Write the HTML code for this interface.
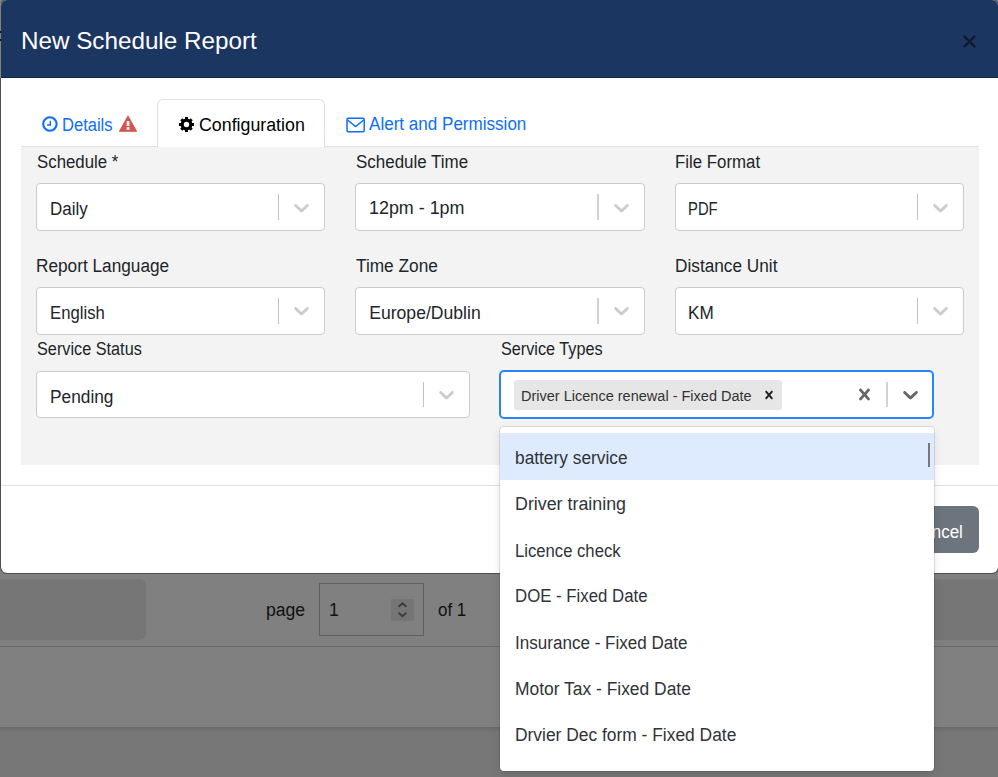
<!DOCTYPE html>
<html><head><meta charset="utf-8">
<style>
*{box-sizing:border-box;margin:0;padding:0}
html,body{width:998px;height:777px;overflow:hidden}
body{position:relative;background:#808080;font-family:"Liberation Sans",sans-serif;color:#212529}
.a{position:absolute;white-space:pre}
#modal{position:absolute;left:0;top:-1px;width:999px;height:575px;background:#fff;background-clip:padding-box;border-radius:7px;border:1px solid rgba(0,0,0,.38)}
</style></head><body>
<div class="a" style="left:-20px;top:579px;width:166px;height:61px;background:#767676;border-radius:6px"></div>
<div class="a" style="left:934px;top:579px;width:100px;height:61px;background:#767676"></div>
<div class="a" style="left:0px;top:646px;width:998px;height:1px;background:#6a6a6a"></div>
<div class="a" style="left:0px;top:727px;width:998px;height:50px;background:linear-gradient(#696969,#777 5px)"></div>
<div class="a" style="left:266.00px;top:599.50px;font-size:17.6px;line-height:21px;color:#111;">page</div>
<div class="a" style="left:319px;top:583px;width:105px;height:53px;border:1px solid #5f5f5f"></div>
<div class="a" style="left:329.00px;top:599.70px;font-size:17.6px;line-height:21px;color:#111;">1</div>
<div class="a" style="left:391px;top:599px;width:23px;height:22px;background:#757575"></div>
<svg class="a" style="left:391px;top:599px" width="23" height="22" viewBox="0 0 23 22"><path d="M8.2 7.3L11.5 4.3L14.8 7.3M8.2 14.2L11.5 17.2L14.8 14.2" fill="none" stroke="#3c3c3c" stroke-width="1.9" stroke-linecap="round" stroke-linejoin="round"/></svg>
<div class="a" style="left:437.90px;top:599.50px;font-size:17.6px;line-height:21px;color:#111;transform:scaleX(0.9629);transform-origin:0 0;">of 1</div>
<div id="modal"></div>
<div class="a" style="left:0px;top:0px;width:1px;height:78px;background:#858278"></div>
<div class="a" style="left:0px;top:31px;width:1px;height:2px;background:#111"></div>
<div class="a" style="left:0px;top:39px;width:1px;height:2px;background:#111"></div>
<div class="a" style="left:1px;top:0px;width:997px;height:78px;background:#1c3662;border-bottom:1px solid #0e2553;border-radius:6px 6px 0 0"></div>
<div class="a" style="left:21.49px;top:25.68px;font-size:24px;line-height:29px;color:#fff;transform:scaleX(1.0095);transform-origin:0 0;">New Schedule Report</div>
<svg class="a" style="left:962px;top:34px" width="15" height="15" viewBox="0 0 16 16"><path d="M2 2L14 14M14 2L2 14" stroke="#111a2c" stroke-width="2.4"/></svg>
<div class="a" style="left:21px;top:146px;width:958px;height:1px;background:#dee2e6"></div>
<div class="a" style="left:157px;top:99px;width:168px;height:49px;background:#fff;border:1px solid #dee2e6;border-bottom:none;border-radius:6px 6px 0 0"></div>
<svg class="a" style="left:42px;top:116.3px" width="16" height="16" viewBox="0 0 16 16"><circle cx="7.9" cy="8" r="6.7" fill="none" stroke="#0d6efd" stroke-width="2.1"/><path d="M8.3 4.8V9H5.1" fill="none" stroke="#0d6efd" stroke-width="1.4"/></svg>
<div class="a" style="left:62.46px;top:114.75px;font-size:17.6px;line-height:21px;color:#0d6efd;transform:scaleX(0.9400);transform-origin:0 0;">Details</div>
<svg class="a" style="left:119px;top:115px" width="18" height="17" viewBox="0 0 18 17"><path d="M9 1.2L17.4 16.2H0.6Z" fill="#d25650" stroke="#d25650" stroke-width="1.2" stroke-linejoin="round"/><rect x="7.7" y="6" width="2.7" height="4.9" fill="#fff"/><rect x="7.7" y="12.1" width="2.7" height="2.7" fill="#fff"/></svg>
<svg class="a" style="left:177.5px;top:116px" width="17" height="17" viewBox="0 0 17 17"><circle cx="8.5" cy="8.5" r="5.9" fill="#000"/><path d="M8.5 1V16M1 8.5H16M3.3 3.3L13.7 13.7M13.7 3.3L3.3 13.7" stroke="#000" stroke-width="3"/><circle cx="8.5" cy="8.5" r="2.7" fill="#fff"/></svg>
<div class="a" style="left:198.90px;top:114.90px;font-size:17.6px;line-height:21px;color:#000;transform:scaleX(1.0109);transform-origin:0 0;">Configuration</div>
<svg class="a" style="left:346px;top:117px" width="19" height="16" viewBox="0 0 19 16"><rect x="1" y="1.3" width="17.2" height="13.4" rx="1.2" fill="none" stroke="#0d6efd" stroke-width="1.5"/><path d="M1.5 3L9.6 9.5L17.7 3" fill="none" stroke="#0d6efd" stroke-width="1.5"/></svg>
<div class="a" style="left:369.40px;top:114.40px;font-size:17.6px;line-height:21px;color:#0d6efd;transform:scaleX(0.9694);transform-origin:0 0;">Alert and Permission</div>
<div class="a" style="left:21px;top:147px;width:958px;height:318px;background:#f3f3f3"></div>
<div class="a" style="left:36.50px;top:151.90px;font-size:17.6px;line-height:21px;color:#212529;transform:scaleX(0.9560);transform-origin:0 0;">Schedule *</div>
<div class="a" style="left:355.50px;top:151.90px;font-size:17.6px;line-height:21px;color:#212529;transform:scaleX(0.9637);transform-origin:0 0;">Schedule Time</div>
<div class="a" style="left:674.94px;top:151.90px;font-size:17.6px;line-height:21px;color:#212529;transform:scaleX(0.9561);transform-origin:0 0;">File Format</div>
<div class="a" style="left:36px;top:183px;width:289px;height:48px;background:#fff;border:1px solid #ccc;border-radius:4px"></div>
<div class="a" style="left:278px;top:194px;width:1px;height:26px;background:#c2c2c2"></div>
<svg class="a" style="left:289.00px;top:194.60px" width="25" height="25" viewBox="0 0 20 20"><path fill="#ccc" d="M4.516 7.548c0.436-0.446 1.043-0.481 1.576 0l3.908 3.747 3.908-3.747c0.533-0.481 1.141-0.446 1.574 0 0.436 0.445 0.408 1.197 0 1.615-0.406 0.418-4.695 4.502-4.695 4.502-0.217 0.223-0.502 0.335-0.787 0.335s-0.57-0.112-0.789-0.335c0 0-4.287-4.084-4.695-4.502s-0.436-1.17 0-1.615z"/></svg>
<div class="a" style="left:355px;top:183px;width:290px;height:48px;background:#fff;border:1px solid #ccc;border-radius:4px"></div>
<div class="a" style="left:597px;top:194px;width:2px;height:26px;background:#d2d2d2"></div>
<svg class="a" style="left:609.00px;top:194.60px" width="25" height="25" viewBox="0 0 20 20"><path fill="#ccc" d="M4.516 7.548c0.436-0.446 1.043-0.481 1.576 0l3.908 3.747 3.908-3.747c0.533-0.481 1.141-0.446 1.574 0 0.436 0.445 0.408 1.197 0 1.615-0.406 0.418-4.695 4.502-4.695 4.502-0.217 0.223-0.502 0.335-0.787 0.335s-0.57-0.112-0.789-0.335c0 0-4.287-4.084-4.695-4.502s-0.436-1.17 0-1.615z"/></svg>
<div class="a" style="left:675px;top:183px;width:289px;height:48px;background:#fff;border:1px solid #ccc;border-radius:4px"></div>
<div class="a" style="left:917px;top:194px;width:1px;height:26px;background:#c2c2c2"></div>
<svg class="a" style="left:928.00px;top:194.60px" width="25" height="25" viewBox="0 0 20 20"><path fill="#ccc" d="M4.516 7.548c0.436-0.446 1.043-0.481 1.576 0l3.908 3.747 3.908-3.747c0.533-0.481 1.141-0.446 1.574 0 0.436 0.445 0.408 1.197 0 1.615-0.406 0.418-4.695 4.502-4.695 4.502-0.217 0.223-0.502 0.335-0.787 0.335s-0.57-0.112-0.789-0.335c0 0-4.287-4.084-4.695-4.502s-0.436-1.17 0-1.615z"/></svg>
<div class="a" style="left:50.03px;top:198.50px;font-size:17.6px;line-height:21px;color:#212529;transform:scaleX(0.9659);transform-origin:0 0;">Daily</div>
<div class="a" style="left:369.18px;top:198.40px;font-size:17.6px;line-height:21px;color:#212529;transform:scaleX(1.0172);transform-origin:0 0;">12pm - 1pm</div>
<div class="a" style="left:688.26px;top:198.80px;font-size:17.6px;line-height:21px;color:#212529;transform:scaleX(0.8420);transform-origin:0 0;">PDF</div>
<div class="a" style="left:35.52px;top:255.80px;font-size:17.6px;line-height:21px;color:#212529;transform:scaleX(0.9792);transform-origin:0 0;">Report Language</div>
<div class="a" style="left:355.90px;top:255.50px;font-size:17.6px;line-height:21px;color:#212529;transform:scaleX(0.9813);transform-origin:0 0;">Time Zone</div>
<div class="a" style="left:674.92px;top:255.50px;font-size:17.6px;line-height:21px;color:#212529;transform:scaleX(0.9794);transform-origin:0 0;">Distance Unit</div>
<div class="a" style="left:36px;top:287px;width:289px;height:48px;background:#fff;border:1px solid #ccc;border-radius:4px"></div>
<div class="a" style="left:278px;top:298px;width:1px;height:26px;background:#c2c2c2"></div>
<svg class="a" style="left:289.00px;top:297.60px" width="25" height="25" viewBox="0 0 20 20"><path fill="#ccc" d="M4.516 7.548c0.436-0.446 1.043-0.481 1.576 0l3.908 3.747 3.908-3.747c0.533-0.481 1.141-0.446 1.574 0 0.436 0.445 0.408 1.197 0 1.615-0.406 0.418-4.695 4.502-4.695 4.502-0.217 0.223-0.502 0.335-0.787 0.335s-0.57-0.112-0.789-0.335c0 0-4.287-4.084-4.695-4.502s-0.436-1.17 0-1.615z"/></svg>
<div class="a" style="left:355px;top:287px;width:290px;height:48px;background:#fff;border:1px solid #ccc;border-radius:4px"></div>
<div class="a" style="left:597px;top:298px;width:2px;height:26px;background:#d2d2d2"></div>
<svg class="a" style="left:609.00px;top:297.60px" width="25" height="25" viewBox="0 0 20 20"><path fill="#ccc" d="M4.516 7.548c0.436-0.446 1.043-0.481 1.576 0l3.908 3.747 3.908-3.747c0.533-0.481 1.141-0.446 1.574 0 0.436 0.445 0.408 1.197 0 1.615-0.406 0.418-4.695 4.502-4.695 4.502-0.217 0.223-0.502 0.335-0.787 0.335s-0.57-0.112-0.789-0.335c0 0-4.287-4.084-4.695-4.502s-0.436-1.17 0-1.615z"/></svg>
<div class="a" style="left:675px;top:287px;width:289px;height:48px;background:#fff;border:1px solid #ccc;border-radius:4px"></div>
<div class="a" style="left:917px;top:298px;width:1px;height:26px;background:#c2c2c2"></div>
<svg class="a" style="left:928.00px;top:297.60px" width="25" height="25" viewBox="0 0 20 20"><path fill="#ccc" d="M4.516 7.548c0.436-0.446 1.043-0.481 1.576 0l3.908 3.747 3.908-3.747c0.533-0.481 1.141-0.446 1.574 0 0.436 0.445 0.408 1.197 0 1.615-0.406 0.418-4.695 4.502-4.695 4.502-0.217 0.223-0.502 0.335-0.787 0.335s-0.57-0.112-0.789-0.335c0 0-4.287-4.084-4.695-4.502s-0.436-1.17 0-1.615z"/></svg>
<div class="a" style="left:50.05px;top:302.90px;font-size:17.6px;line-height:21px;color:#212529;transform:scaleX(0.9496);transform-origin:0 0;">English</div>
<div class="a" style="left:369.20px;top:302.50px;font-size:17.6px;line-height:21px;color:#212529;">Europe/Dublin</div>
<div class="a" style="left:688.13px;top:302.80px;font-size:17.6px;line-height:21px;color:#212529;transform:scaleX(0.9743);transform-origin:0 0;">KM</div>
<div class="a" style="left:36.50px;top:338.90px;font-size:17.6px;line-height:21px;color:#212529;transform:scaleX(0.9240);transform-origin:0 0;">Service Status</div>
<div class="a" style="left:500.50px;top:338.70px;font-size:17.6px;line-height:21px;color:#212529;transform:scaleX(0.9214);transform-origin:0 0;">Service Types</div>
<div class="a" style="left:36px;top:371px;width:434px;height:47px;background:#fff;border:1px solid #ccc;border-radius:4px"></div>
<div class="a" style="left:423px;top:382px;width:1px;height:25px;background:#c2c2c2"></div>
<svg class="a" style="left:434.00px;top:381.50px" width="25" height="25" viewBox="0 0 20 20"><path fill="#ccc" d="M4.516 7.548c0.436-0.446 1.043-0.481 1.576 0l3.908 3.747 3.908-3.747c0.533-0.481 1.141-0.446 1.574 0 0.436 0.445 0.408 1.197 0 1.615-0.406 0.418-4.695 4.502-4.695 4.502-0.217 0.223-0.502 0.335-0.787 0.335s-0.57-0.112-0.789-0.335c0 0-4.287-4.084-4.695-4.502s-0.436-1.17 0-1.615z"/></svg>
<div class="a" style="left:50.02px;top:386.60px;font-size:17.6px;line-height:21px;color:#212529;transform:scaleX(0.9828);transform-origin:0 0;">Pending</div>
<div class="a" style="left:499px;top:370px;width:435px;height:49px;background:#fff;border:2px solid #2684ff;border-radius:5px"></div>
<div class="a" style="left:514px;top:380px;width:268px;height:30px;background:#e6e6e6;border-radius:3px"></div>
<div class="a" style="left:520.63px;top:387.02px;font-size:14.96px;line-height:18px;color:#333;transform:scaleX(0.9705);transform-origin:0 0;">Driver Licence renewal - Fixed Date</div>
<svg class="a" style="left:760.80px;top:386.50px" width="16" height="16" viewBox="0 0 20 20"><path fill="#222" d="M14.348 14.849c-0.469 0.469-1.229 0.469-1.697 0l-2.651-3.030-2.651 3.029c-0.469 0.469-1.229 0.469-1.697 0-0.469-0.469-0.469-1.229 0-1.697l2.758-3.15-2.759-3.152c-0.469-0.469-0.469-1.228 0-1.697s1.228-0.469 1.697 0l2.652 3.031 2.651-3.031c0.469-0.469 1.228-0.469 1.697 0s0.469 1.229 0 1.697l-2.758 3.152 2.758 3.15c0.469 0.469 0.469 1.229 0 1.698z"/></svg>
<svg class="a" style="left:853.00px;top:382.80px" width="23" height="23" viewBox="0 0 20 20"><path fill="#666" d="M14.348 14.849c-0.469 0.469-1.229 0.469-1.697 0l-2.651-3.030-2.651 3.029c-0.469 0.469-1.229 0.469-1.697 0-0.469-0.469-0.469-1.229 0-1.697l2.758-3.15-2.759-3.152c-0.469-0.469-0.469-1.228 0-1.697s1.228-0.469 1.697 0l2.652 3.031 2.651-3.031c0.469-0.469 1.228-0.469 1.697 0s0.469 1.229 0 1.697l-2.758 3.152 2.758 3.15c0.469 0.469 0.469 1.229 0 1.698z"/></svg>
<div class="a" style="left:886px;top:382px;width:2px;height:25px;background:#d2d2d2"></div>
<svg class="a" style="left:898.00px;top:381.70px" width="25" height="25" viewBox="0 0 20 20"><path fill="#666" d="M4.516 7.548c0.436-0.446 1.043-0.481 1.576 0l3.908 3.747 3.908-3.747c0.533-0.481 1.141-0.446 1.574 0 0.436 0.445 0.408 1.197 0 1.615-0.406 0.418-4.695 4.502-4.695 4.502-0.217 0.223-0.502 0.335-0.787 0.335s-0.57-0.112-0.789-0.335c0 0-4.287-4.084-4.695-4.502s-0.436-1.17 0-1.615z"/></svg>
<div class="a" style="left:1px;top:485px;width:997px;height:1px;background:#dee2e6"></div>
<div class="a" style="left:850px;top:506px;width:129px;height:47px;background:#6c757d;border-radius:6px"></div>
<div class="a" style="left:910.40px;top:521.90px;font-size:17.6px;line-height:21px;color:#fff;transform:scaleX(0.9655);transform-origin:0 0;">Cancel</div>
<div class="a" style="left:500px;top:427px;width:434px;height:344px;background:#fff;border-radius:4px;box-shadow:0 0 0 1px rgba(0,0,0,.1),0 4px 11px rgba(0,0,0,.1)"></div>
<div class="a" style="left:500px;top:433px;width:434px;height:47px;background:#deebff"></div>
<div class="a" style="left:928px;top:443px;width:2px;height:24px;background:#777"></div>
<div class="a" style="left:515.02px;top:447.50px;font-size:17.6px;line-height:21px;color:#303338;transform:scaleX(0.9839);transform-origin:0 0;">battery service</div>
<div class="a" style="left:514.99px;top:494.00px;font-size:17.6px;line-height:21px;color:#303338;transform:scaleX(1.0137);transform-origin:0 0;">Driver training</div>
<div class="a" style="left:515.05px;top:540.50px;font-size:17.6px;line-height:21px;color:#303338;transform:scaleX(0.9468);transform-origin:0 0;">Licence check</div>
<div class="a" style="left:515.04px;top:586.00px;font-size:17.6px;line-height:21px;color:#303338;transform:scaleX(0.9551);transform-origin:0 0;">DOE - Fixed Date</div>
<div class="a" style="left:515.03px;top:632.90px;font-size:17.6px;line-height:21px;color:#303338;transform:scaleX(0.9694);transform-origin:0 0;">Insurance - Fixed Date</div>
<div class="a" style="left:515.01px;top:678.60px;font-size:17.6px;line-height:21px;color:#303338;transform:scaleX(0.9900);transform-origin:0 0;">Motor Tax - Fixed Date</div>
<div class="a" style="left:515.01px;top:725.40px;font-size:17.6px;line-height:21px;color:#303338;transform:scaleX(0.9888);transform-origin:0 0;">Drvier Dec form - Fixed Date</div>
</body></html>
